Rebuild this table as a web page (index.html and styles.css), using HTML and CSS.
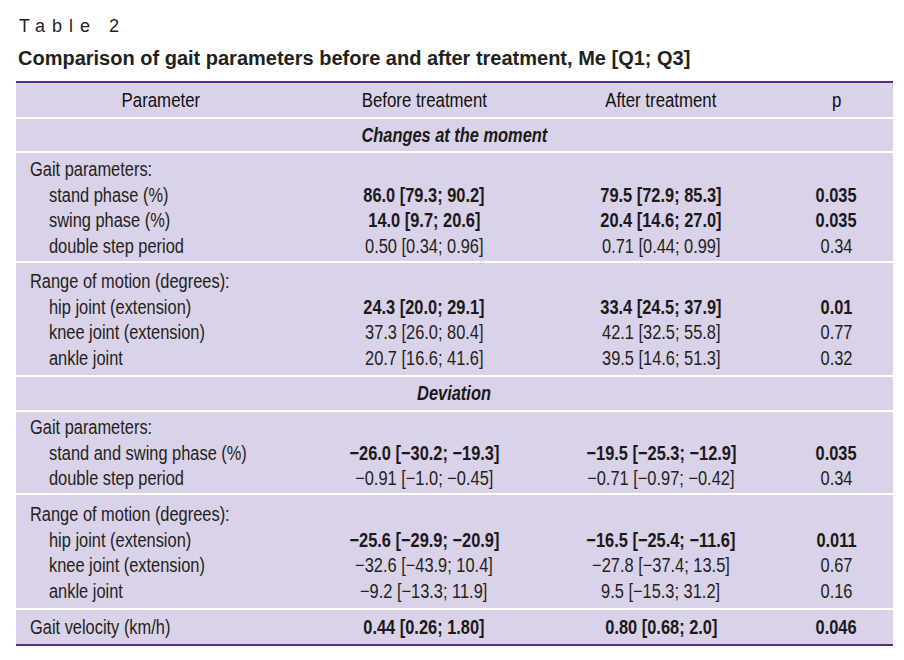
FILE: index.html
```html
<!DOCTYPE html>
<html lang="en">
<head>
<meta charset="utf-8">
<title>Table 2</title>
<link rel="stylesheet" href="styles.css">
</head>
<body>
<div class="page">
  <div class="label">Table 2</div>
  <h1 class="caption">Comparison of gait parameters before and after treatment, Me [Q1; Q3]</h1>
  <table class="data">
    <colgroup>
      <col class="c1"><col class="c2"><col class="c3"><col class="c4">
    </colgroup>
    <thead>
      <tr><th><span class="n">Parameter</span></th><th><span class="n">Before treatment</span></th><th><span class="n">After treatment</span></th><th><span class="n">p</span></th></tr>
    </thead>
    <tbody class="section s1">
      <tr><td colspan="4"><span class="n">Changes at the moment</span></td></tr>
    </tbody>
    <tbody class="group g1">
      <tr><td class="name"><span class="n">Gait parameters:</span></td><td></td><td></td><td></td></tr>
      <tr><td class="sub"><span class="n">stand phase (%)</span></td><td class="b"><span class="n">86.0 [79.3; 90.2]</span></td><td class="b"><span class="n">79.5 [72.9; 85.3]</span></td><td class="b"><span class="n">0.035</span></td></tr>
      <tr><td class="sub"><span class="n">swing phase (%)</span></td><td class="b"><span class="n">14.0 [9.7; 20.6]</span></td><td class="b"><span class="n">20.4 [14.6; 27.0]</span></td><td class="b"><span class="n">0.035</span></td></tr>
      <tr><td class="sub"><span class="n">double step period</span></td><td><span class="n">0.50 [0.34; 0.96]</span></td><td><span class="n">0.71 [0.44; 0.99]</span></td><td><span class="n">0.34</span></td></tr>
    </tbody>
    <tbody class="group g2">
      <tr><td class="name"><span class="n">Range of motion (degrees):</span></td><td></td><td></td><td></td></tr>
      <tr><td class="sub"><span class="n">hip joint (extension)</span></td><td class="b"><span class="n">24.3 [20.0; 29.1]</span></td><td class="b"><span class="n">33.4 [24.5; 37.9]</span></td><td class="b"><span class="n">0.01</span></td></tr>
      <tr><td class="sub"><span class="n">knee joint (extension)</span></td><td><span class="n">37.3 [26.0; 80.4]</span></td><td><span class="n">42.1 [32.5; 55.8]</span></td><td><span class="n">0.77</span></td></tr>
      <tr><td class="sub"><span class="n">ankle joint</span></td><td><span class="n">20.7 [16.6; 41.6]</span></td><td><span class="n">39.5 [14.6; 51.3]</span></td><td><span class="n">0.32</span></td></tr>
    </tbody>
    <tbody class="section s2">
      <tr><td colspan="4"><span class="n">Deviation</span></td></tr>
    </tbody>
    <tbody class="group g3">
      <tr><td class="name"><span class="n">Gait parameters:</span></td><td></td><td></td><td></td></tr>
      <tr><td class="sub"><span class="n">stand and swing phase (%)</span></td><td class="b"><span class="n">&minus;26.0 [&minus;30.2; &minus;19.3]</span></td><td class="b"><span class="n">&minus;19.5 [&minus;25.3; &minus;12.9]</span></td><td class="b"><span class="n">0.035</span></td></tr>
      <tr><td class="sub"><span class="n">double step period</span></td><td><span class="n">&minus;0.91 [&minus;1.0; &minus;0.45]</span></td><td><span class="n">&minus;0.71 [&minus;0.97; &minus;0.42]</span></td><td><span class="n">0.34</span></td></tr>
    </tbody>
    <tbody class="group g4">
      <tr><td class="name"><span class="n">Range of motion (degrees):</span></td><td></td><td></td><td></td></tr>
      <tr><td class="sub"><span class="n">hip joint (extension)</span></td><td class="b"><span class="n">&minus;25.6 [&minus;29.9; &minus;20.9]</span></td><td class="b"><span class="n">&minus;16.5 [&minus;25.4; &minus;11.6]</span></td><td class="b"><span class="n">0.011</span></td></tr>
      <tr><td class="sub"><span class="n">knee joint (extension)</span></td><td><span class="n">&minus;32.6 [&minus;43.9; 10.4]</span></td><td><span class="n">&minus;27.8 [&minus;37.4; 13.5]</span></td><td><span class="n">0.67</span></td></tr>
      <tr><td class="sub"><span class="n">ankle joint</span></td><td><span class="n">&minus;9.2 [&minus;13.3; 11.9]</span></td><td><span class="n">9.5 [&minus;15.3; 31.2]</span></td><td><span class="n">0.16</span></td></tr>
    </tbody>
    <tbody class="group g5">
      <tr><td class="name"><span class="n">Gait velocity (km/h)</span></td><td class="b"><span class="n">0.44 [0.26; 1.80]</span></td><td class="b"><span class="n">0.80 [0.68; 2.0]</span></td><td class="b"><span class="n">0.046</span></td></tr>
    </tbody>
  </table>
</div>
</body>
</html>
```
FILE: styles.css
```css
html, body {
  margin: 0;
  padding: 0;
  background: #ffffff;
}

.page {
  padding: 16px 11px 0 16px;
  color: #231f20;
  font-family: "Liberation Sans", Arial, sans-serif;
}

.label {
  font-size: 18px;
  line-height: 20px;
  letter-spacing: 7px;
  padding-left: 3px;
  color: #231f20;
}

.caption {
  font-size: 20px;
  line-height: 22px;
  font-weight: bold;
  margin: 11px 0 0 2px;
  color: #231f20;
}

/* Arial Narrow look: Liberation Sans condensed horizontally */
.n {
  display: inline-block;
  transform: scaleX(0.82);
  transform-origin: center center;
}

.data {
  margin-top: 12px;
  width: 877px;
  border-collapse: separate;
  border-spacing: 0;
  table-layout: fixed;
  background: #d9d2e8;
  border-top: 2px solid #5a2d84;
  border-bottom: 2px solid #5a2d84;
  font-size: 20px;
}

.c1 { width: 290px; }
.c2 { width: 236px; }
.c3 { width: 238px; }
.c4 { width: 113px; }

.data th {
  font-weight: normal;
  font-size: 20.5px;
  line-height: 24px;
  padding: 5px 0;
  text-align: center;
  color: #121011;
}

.data td {
  padding: 0;
  line-height: 25.5px;
  text-align: center;
  white-space: nowrap;
  color: #231f20;
}

.section td {
  border-top: 2px solid #ffffff;
  line-height: 24px;
  font-weight: bold;
  font-style: italic;
  color: #1c191a;
}

.s1 td { padding: 4px 0 4px; }
.s2 td { padding: 4px 0 5px; }

.group tr:first-child td {
  border-top: 2px solid #ffffff;
}

.g1 tr:first-child td { padding-top: 4px; }
.g1 tr:last-child td { padding-bottom: 2px; }

.g2 tr:first-child td { padding-top: 6px; }
.g2 tr:last-child td { padding-bottom: 4px; }

.g3 tr:first-child td { padding-top: 3px; }
.g3 tr:last-child td { padding-bottom: 1.5px; }

.g4 tr:first-child td { padding-top: 7px; }
.g4 tr:last-child td { padding-bottom: 4px; }

.g5 tr:first-child td {
  padding-top: 5px;
  padding-bottom: 3.5px;
}

.data td.name {
  text-align: left;
  padding-left: 14px;
}

.data td.sub {
  text-align: left;
  padding-left: 33px;
}

.data td.name .n,
.data td.sub .n {
  transform-origin: left center;
}

.data td.b {
  font-weight: bold;
  color: #1c191a;
}
```
